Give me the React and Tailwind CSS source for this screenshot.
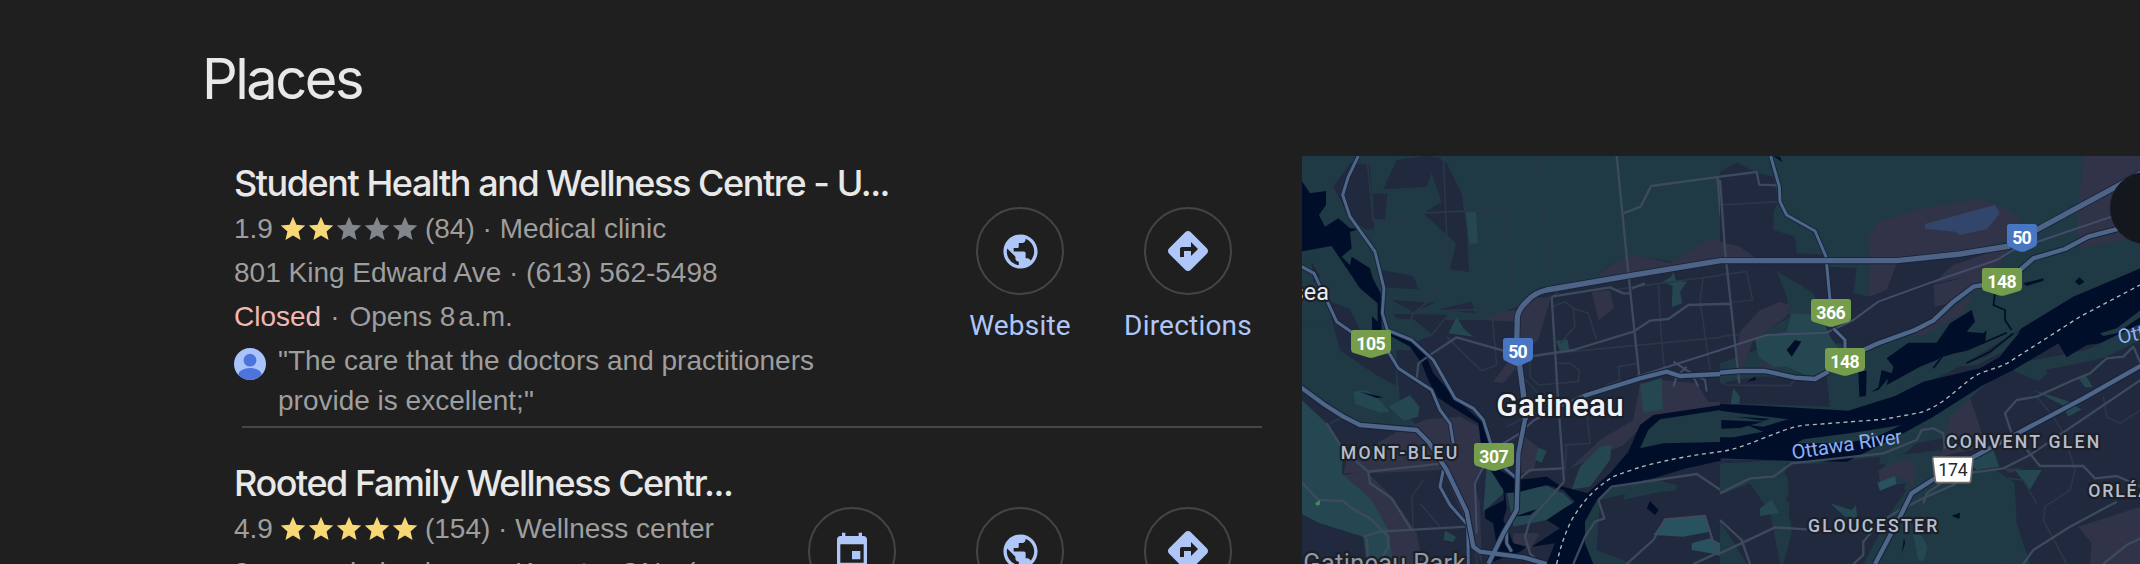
import React from 'react'
import { MdDirections, MdEvent, MdPublic, MdStar } from 'react-icons/md'

const places = [
  {
    name: 'Student Health and Wellness Centre - U...',
    rating: '1.9',
    stars: 2,
    reviews: 84,
    type: 'Medical clinic',
    details: '801 King Edward Ave · (613) 562-5498',
    closed: true,
    quote: ['"The care that the doctors and practitioners', 'provide is excellent;"'],
    actions: ['Website', 'Directions'],
  },
  {
    name: 'Rooted Family Wellness Centr...',
    rating: '4.9',
    stars: 5,
    reviews: 154,
    type: 'Wellness center',
    details: '3+ years in business · Kanata, ON · (',
    actions: ['Schedule', 'Website', 'Directions'],
  },
]

const icons = {
  Website: <MdPublic className="size-[41px]" />,
  Directions: <MdDirections className="size-12" />,
  Schedule: <MdEvent className="size-10" />,
}

function Stars({ count }) {
  return (
    <span className="flex ml-[6px] mr-[6px]">
      {[1, 2, 3, 4, 5].map((n) => (
        <MdStar key={n} className={`size-7 scale-105 ${n <= count ? 'text-[#f8d775]' : 'text-[#80868b]'}`} />
      ))}
    </span>
  )
}

function Avatar() {
  return (
    <svg viewBox="0 0 32 32" className="size-8 shrink-0 mt-[9px]">
      <defs>
        <clipPath id="avatar"><circle cx="16" cy="16" r="16" /></clipPath>
      </defs>
      <g clipPath="url(#avatar)">
        <rect width="32" height="32" fill="#a8c4fb" />
        <circle cx="16" cy="12.2" r="6.4" fill="#4d74dc" />
        <ellipse cx="16" cy="26.5" rx="11.5" ry="6.4" fill="#4d74dc" />
      </g>
    </svg>
  )
}

function Action({ label }) {
  return (
    <button className="w-[168px] flex flex-col items-center text-[#aec6f8]">
      <span className="size-[88px] rounded-full border-2 border-[#444646] flex items-center justify-center">
        {icons[label]}
      </span>
      <span className="mt-[11px] text-[28px] leading-10 font-['Roboto',sans-serif] tracking-[0.2px]">{label}</span>
    </button>
  )
}

function Place({ place }) {
  return (
    <div className="flex justify-between h-[300px] pl-[234px] pr-[30px]">
      <div className="text-[28px] leading-[44px] text-[#9e9e9e] whitespace-nowrap w-0">
        <h3 className="font-['Inter',sans-serif] font-medium text-[36px] leading-[44px] tracking-[-1.45px] text-[#e8e8e8] pt-[5px] pb-[2px]">
          {place.name}
        </h3>
        <div className="flex items-center">
          {place.rating}
          <Stars count={place.stars} />
          <span>({place.reviews}) · {place.type}</span>
        </div>
        <p>{place.details}</p>
        {place.closed && (
          <p>
            <span className="text-[#f0b8b4]">Closed</span>
            <span className="ml-[9px] mr-[10px]">·</span>
            <span>Opens 8<span className="ml-[3px]">a.m.</span></span>
          </p>
        )}
        {place.quote && (
          <div className="flex gap-3">
            <Avatar />
            <div className="leading-10 pt-[2px]">
              {place.quote.map((line) => <p key={line}>{line}</p>)}
            </div>
          </div>
        )}
      </div>
      <div className="flex pt-[51px]">
        {place.actions.map((a) => <Action key={a} label={a} />)}
      </div>
    </div>
  )
}

// The map is traced in two tiles, each 1260 units wide at 3 units per pixel
const west = {
  green: [
    'M0 18H1262V270L1120 335 1000 318 920 350 870 400 700 440 640 475 560 510 440 510 440 494 280 492 340 560 350 600 290 600 290 740 350 830 180 825 6 715Z',
    'M6 510 150 560 290 640 300 750 200 830 6 715Z',
    'M930 1015 1070 990 1130 1005 1130 1020 1060 1030 970 1050 975 1032 900 1050 890 1200 1000 1242 800 1242 870 1080Z',
    'M280 505 340 508 400 555 350 575 320 560Z',
  ],
  urban: [
    'M150 40 210 45 222 235 200 240 150 205 100 110Z',
    'M290 30 380 18 412 22 380 110 250 118Z',
    'M220 130 262 132 255 210 220 205Z',
    'M395 70 412 20 440 40 485 130 500 240 507 365 450 358 468 280 370 190 425 155Z',
    'M245 360 340 378 355 418 245 412Z',
    'M275 450 405 458 340 487Z',
    'M420 478 515 455 525 490Z',
    'M80 450 150 478 190 560 290 640 287 707 220 670 120 600Z',
    'M35 335 60 380 40 400Z',
  ],
  purple: [
    'M870 400 920 352 1000 315 1110 338 1230 268 1262 268V330L1000 378Z',
    'M875 425 930 420 942 475 895 512Z',
    'M752 445 715 570 690 590 660 640 610 700 580 695 650 600 650 515 550 510 600 485 650 480 700 440Z',
    'M300 840 380 808 480 800 540 830 565 940 520 1000 540 1060 545 1242 500 1120 430 960 200 970 130 970 140 930Z',
    'M130 975 200 965 280 1045 350 1150 370 1242 280 1242 265 1140 200 1060Z',
    'M655 845 718 895 700 965 655 970Z',
    'M1085 690 1190 700 1225 755 1262 756V765L1060 795 970 885 810 955 900 870 1000 810 1020 700Z',
    'M640 1150 720 1150 690 1200 640 1180Z',
  ],
  light: [
    'M470 500 490 535 520 560 445 550Z',
    'M160 725 200 720 230 740 270 785 240 788 165 762Z',
    'M265 770 330 735 358 770 355 800 310 812Z',
    'M768 572 802 568 808 598 780 602Z',
    'M498 185 528 187 534 280 508 282Z',
    'M1088 395 1112 382 1120 365 1128 390 1160 397 1140 425 1147 460 1115 472 1118 408Z',
    'M1020 705 1085 683 1088 778 1030 790Z',
    'M900 890 935 885 930 930 870 1010 815 1018 840 950Z',
    'M715 893 740 902 725 938 705 930Z',
    'M560 945 600 990 615 1025 550 1085Z',
    'M0 745 80 820 130 905 125 970 215 1050 265 1140 280 1242 200 1242 190 1160 60 1120 0 1090Z',
    'M620 1020 740 1008 790 1030 820 1060 740 1110 640 1130Z',
    'M435 1143 468 1160 460 1176 430 1170Z',
  ],
  teal: [
    'M1095 1108 1215 1098 1228 1145 1150 1160 1060 1155Z',
    'M1175 1180 1230 1165 1262 1180V1215L1175 1200Z',
  ],
  water: [
    'M0 85 30 130 78 123 78 165 57 195 75 230 115 205 150 235 180 236 150 245 155 295 125 320 150 345 155 320 210 355 218 385 242 430 245 550 216 540 216 498 233 515 233 460 180 415 95 288 0 305Z',
    'M250 545 340 575 380 620 400 670 470 748 555 825 570 900 600 960 650 990 740 980 782 1008 862 1030 930 970 985 905 1020 825 1060 795 1262 766V932L1160 955 1060 985 940 1010 890 1050 855 1115 855 1180 880 1242 740 1242 765 1180 695 1190 780 1135 740 1110 800 1070 825 1055 790 1020 740 1005 660 1025 615 1030 620 1075 610 1110 640 1180 680 1190 660 1205 560 1242 590 1190 580 1120 555 1105 555 1080 612 1050 610 1020 565 950 545 900 535 820 455 770 410 740 385 690 365 640 330 590Z',
    'M1050 1053 1076 1080 1065 1095 1040 1075Z',
    'M180 725 250 742 230 744Z',
    'M640 1100 710 1078 690 1095Z',
  ],
  island: [
    'M1080 808 1262 780V876L1090 880 1020 895 1045 840Z',
  ],
  faint: [
    'M200 18 220 212 290 212 345 190 615 178 645 470',
    'M715 18 720 130 758 410',
    'M430 18 445 370 390 450 340 490 325 530',
    'M440 480 575 478 590 645 545 662 500 620 440 560',
    'M640 470 760 440 830 365 870 380',
    'M1075 400 1085 580 1095 670M1210 380 1200 450 1230 660M940 420 1080 400 1262 376',
    'M755 610 1262 562M755 470 795 455 820 475 865 490 890 570M820 475 825 530 780 580',
    'M690 600 690 680 715 705 835 695 838 660 810 640 770 640',
    'M960 700 955 650 1015 640M640 650 760 780 860 730 960 690',
    'M620 830 700 790 860 780 870 880 795 885',
    'M90 820 150 790 220 800M340 1140 335 1040 370 990M420 1130 360 1060',
    'M530 1242 520 1000 540 960M800 880 795 960',
    'M390 560 440 500',
  ],
  minor: [
    'M950 18 985 370 1018 680',
    'M970 190 1022 170 1053 108 1262 80M1252 80 1262 200',
    'M755 440 930 412 970 430 990 430M755 440 775 760 792 995',
    'M700 618 820 600 1000 545 1050 512 1105 507 1165 465 1262 462',
    'M350 690 355 640 400 608 470 562 610 602M995 415 1035 400',
    'M80 820 130 900 205 965 210 1000 275 1045 335 1140M205 965 430 940',
    'M0 990 55 1050 130 1053 155 1075 210 1105 265 1160 265 1190 235 1242M190 1160 240 1145 500 1130M200 1165 205 1242',
    'M660 985 690 960 790 955M792 995 690 1110 675 1160 690 1210 720 1242',
    'M895 1050 935 1010 1190 972 1262 1020M895 1050 913 1105 885 1115 855 1160 820 1242M980 1242 1060 1170 1095 1108 1215 1098 1250 1210 1262 1215M1250 1210 1180 1242',
  ],
  purpleRoad: [
    'M680 830 700 812 850 735M1010 680 1262 600M1120 635 1175 670 1215 690 1220 725M1160 650 1130 680 1120 710M1180 680 1195 710',
    'M610 880 660 850M530 1150 525 1000 550 950',
  ],
  road: [
    'M175 18 145 80 128 135 150 200 225 305 252 415 247 490 262 540 335 570 400 630 465 745 520 775 550 810 572 880',
    'M0 347 42 370 75 440 110 515 160 550M265 605 295 655 395 720 420 780 450 820 460 880M430 960 420 1010 450 1065 503 1125 505 1242',
    'M615 955 650 985',
    'M620 1130 620 1180 635 1205',
  ],
  highway: [
    'M0 710 75 765 130 800 180 825 350 840 385 875 440 960 500 1085 520 1190 540 1205 670 1222 740 1242',
    'M850 738 1020 685 1100 665 1140 678 1262 672',
    'M675 808 655 910 650 1080 610 1150 565 1242',
  ],
  major: ['M658 640 670 730 676 810M650 590 652 500Q657 475 685 450 705 428 740 420L990 377 1262 332'],
}

const east = {
  green: [
    'M0 18H1262V360L1060 440 900 540 700 660 530 740 380 785 120 765 0 760V640L110 600 105 560 210 500 200 440 160 340 0 270Z',
    'M600 720 780 660 1100 600 1262 520V600L980 660 990 710 850 650 760 745 700 800 680 860 600 830Z',
    'M220 835 680 790 690 860 590 880 520 940 380 950 200 940 180 1040 210 1060 190 1242 0 1242V940L200 930 0 930Z',
    'M500 920 660 900 680 960 880 960 890 1080 950 1242 430 1242 560 1000 480 1010Z',
    'M0 1030 190 970 220 1000 195 1060 250 1240 190 1242 120 1100Z',
  ],
  urban: [
    'M0 65 50 38 110 68 160 80 175 155 160 185 160 240 225 260 230 310 315 315 320 400 300 440 130 340 0 320Z',
    'M0 345 110 350 175 410 110 470 0 540Z',
    'M270 405 320 400 325 350 410 355 400 430 450 440 480 350 520 340 700 320 860 290 780 400 640 500 440 585 340 580 300 480Z',
    'M340 530 470 460 660 400 770 370 780 405 640 515 430 600 370 600Z',
    'M0 700 110 680 320 680 330 770 120 762 0 760Z',
    'M200 950 480 920 470 1000 560 1020 480 1130 400 1242 190 1242 215 1150Z',
    'M15 1030 90 1000 150 1090 180 1242 80 1242 0 1110V1030Z',
    'M750 745 860 650 950 700 1000 655 1100 650 1262 570V1242H930L890 1120 885 1000 800 940Z',
  ],
  purple: [
    'M1090 18H1262V260L1080 295 1070 210Z',
    'M470 220 590 178 780 148 850 175 905 210 880 270 700 310 530 340 500 420 450 440 445 260Z',
    'M700 345 860 290 850 330 800 370 640 400Z',
    'M640 405 790 370 790 410 690 460 645 470Z',
    'M530 555 640 520 760 430 730 490 600 560Z',
    'M0 275 60 290 130 340 0 330Z',
    'M60 545 120 480 180 455 210 465 200 500 100 570 60 680 50 600Z',
    'M750 745 800 890 660 920 690 800Z',
    'M475 960 560 925 590 950 580 1010 540 980 480 1000Z',
    'M1075 1130 1262 1070V1242H1110L1115 1180Z',
    'M850 955 910 955 870 970Z',
    'M110 640 180 640 170 670Z',
  ],
  light: [
    'M215 490 300 495 330 560 360 600 320 660 270 680 200 650 160 650 115 620 105 565 200 545Z',
    'M40 715 60 740 58 762 32 762Z',
    'M120 1075 155 1048 178 1090 120 1098Z',
    'M330 1060 395 1080 408 1065 412 1105 375 1100Z',
    'M1075 685 1095 672 1118 712 1095 712Z',
    'M1035 780 1060 765 1085 778 1045 800Z',
    'M940 720 1050 755 1045 775Z',
    'M580 1155 605 1155 622 1190 612 1232 595 1232Z',
    'M740 930 820 900 838 950 770 960Z',
    'M885 960 965 960 930 1020Z',
  ],
  teal: ['M472 998 525 978 530 1002 480 1022Z'],
  water: [
    'M0 762 130 768 385 782 525 738 610 695 780 655 840 620 905 535 1060 440 1262 355V520L1140 580 1100 585 1040 622 1015 580 880 660 790 705 640 800 550 850 380 935 200 932 0 925Z',
    'M500 625 565 578 650 578 690 520 755 480 765 515 740 545 790 550 800 540 795 580 700 610 600 650 500 705 505 685 475 720 455 725 475 712 485 660 515 670 520 650Z',
    'M415 665 440 662 438 738 418 740Z',
    'M200 600 225 570 244 575 215 620Z',
    'M1065 395 1078 382 1093 395 1078 406Z',
    'M910 400 970 385 970 392 920 408Z',
    'M80 695 105 680 108 690Z',
    'M695 1097 720 1088 718 1107Z',
    'M545 1210 552 1165 555 1180Z',
    'M160 18 180 20 187 36Z',
  ],
  island: [
    'M0 782 100 795 205 808 130 830 80 825 130 845 40 862 0 862Z',
    'M250 868 400 848 545 825 460 865 370 880 230 880Z',
    'M1140 550 1190 535 1262 480V500L1190 550 1150 558Z',
    'M625 665 660 622 740 605 830 560 870 545 740 625 660 640Z',
    'M700 650 800 620 870 560 900 545 850 605 770 645Z',
  ],
  inlet: ['M4 810 60 812 130 815 60 834 4 836Z', 'M50 800 150 806 130 812Z'],
  thinWater: ['M825 430 820 465 855 480 855 510 875 540M640 655 670 615 740 600 860 548M740 640 810 605 880 550'],
  lake: ['M615 222 825 165 840 190 800 238 720 255 705 245 615 236Z'],
  faint: [
    'M0 165 175 155M0 375 80 365 98 450 0 462',
    'M0 560 90 550 170 495 230 485M0 690 20 705 210 707 230 680',
    'M1150 740 1160 800 1200 820 1262 780M950 740 1000 800 1030 850 1065 960 1050 1020 975 1070 970 1110 1040 1242',
    'M860 985 910 990 950 1060M600 1150 640 1190 690 1242M610 1110 620 1060M840 1242 920 1210',
  ],
  minor: [
    'M0 80 110 66 118 104 175 106',
    'M0 90 15 300 58 700M0 462 30 462',
    'M0 1030 90 985 160 980 215 940 490 910 590 870 605 840 640 835 670 850 675 895',
    'M0 1110 65 1170 90 1242M0 1210 165 1132 260 1138M65 1170 75 1200M400 1242 430 1215 430 1175 480 1115 540 1080 620 1040 700 1005 740 970 850 955 930 915 1262 690',
    'M875 850 855 790 890 750 950 740 1060 690 1110 670 1160 625 1210 620 1240 590 1262 640',
    'M880 850 960 948 1090 948 1125 985 1190 978 1262 1010M610 1060 620 1030 670 995',
    'M910 1242 940 1200 1050 1130 1190 1055M1150 1242 1220 1185 1262 1165',
  ],
  purpleRoad: ['M0 600 140 555 320 548 400 510 475 455 640 395 830 330 880 300 1175 200'],
  road: [
    'M152 18 178 110 180 155 200 195 285 243 318 320 330 450M340 535 375 570 375 600',
  ],
  highway: [
    'M0 668 60 663 135 663 225 683 285 687 325 665M430 600 475 580 585 540 640 512 700 455 760 410 790 405M900 360 940 325 1035 297 1105 260 1200 235',
    'M1262 648 1090 745 870 862 660 975 575 1030 540 1100 465 1242',
  ],
  major: ['M0 332H530L720 312 870 288M940 245 1262 70'],
}

const fills = [
  ['green', '#1f3945'],
  ['urban', '#20293e'],
  ['purple', '#313449'],
  ['light', '#244751'],
  ['teal', '#28525f'],
  ['lake', '#32456b'],
  ['water', '#000e29'],
  ['island', '#1f3945'],
  ['inlet', '#000e29'],
]

const lines = [
  ['thinWater', '#000e29', 5],
  ['faint', '#2a3748', 5],
  ['minor', '#3d4a5d', 7],
  ['purpleRoad', '#434c69', 6],
  ['road', '#182236', 14],
  ['road', '#4d6689', 9],
  ['highway', '#182236', 19],
  ['highway', '#4d6689', 13],
  ['major', '#182236', 21],
  ['major', '#4d6388', 16],
]

function Tile({ tile }) {
  return (
    <>
      {fills.map(([key, color]) =>
        tile[key]?.map((d) => <path key={d} d={d} fill={color} />)
      )}
      {lines.map(([key, color, width]) =>
        tile[key]?.map((d) => (
          <path key={d + color} d={d} fill="none" stroke={color} strokeWidth={width} strokeLinejoin="round" />
        ))
      )}
    </>
  )
}

function Shield({ x, y, label, color = '#769d4b' }) {
  const w = label.length > 2 ? 120 : 90
  return (
    <g transform={`translate(${x} ${y})`}>
      <path
        d={`M8 0H${w - 8}Q${w} 0 ${w} 8V58Q${w} 66 ${w - 8} 69L${w / 2 + 10} 82Q${w / 2} 85 ${w / 2 - 10} 82L8 69Q0 66 0 58V8Q0 0 8 0Z`}
        fill={color}
      />
      <text x={w / 2} y="60" fill="#fff" fontSize="53" fontWeight="700" textAnchor="middle" textLength={w - 32}>
        {label}
      </text>
    </g>
  )
}

function Label({ x, y, size = 53, width, color = '#b5bdce', weight = 500, children, ...rest }) {
  return (
    <text
      x={x}
      y={y}
      fontSize={size}
      fontWeight={weight}
      fill={color}
      stroke="#1c2026"
      strokeWidth="13"
      strokeLinejoin="round"
      paintOrder="stroke"
      textLength={width}
      {...rest}
    >
      {children}
    </text>
  )
}

function Map() {
  return (
    <div className="relative w-[838px] h-[408px] overflow-hidden shrink-0">
      <svg viewBox="6 18 2514 1224" className="w-full h-full font-['Roboto',sans-serif]">
        <rect width="2520" height="1242" fill="#20293e" />
        <Tile tile={west} />
        <g transform="translate(1260 0)"><Tile tile={east} /></g>
        <path
          d="M770 1242Q785 1170 815 1110C850 1050 890 1010 940 980Q1060 930 1260 905C1340 895 1440 835 1510 826L1750 808 1860 788C1940 765 1990 690 2045 668C2080 655 2110 650 2140 628L2340 500 2520 405"
          fill="none" stroke="#b9b7b5" strokeWidth="4" strokeDasharray="12 11"
        />
        <path d="M45 1060 60 1050V1064L50 1067Z" fill="#3f8a54" />
        <Shield x={153} y={540} label="105" />
        <Shield x={522} y={879} label="307" />
        <Shield x={609} y={564} label="50" color="#4876c2" />
        <Shield x={2121} y={222} label="50" color="#4876c2" />
        <Shield x={2046} y={354} label="148" />
        <Shield x={1533} y={447} label="366" />
        <Shield x={1575} y={594} label="148" />
        <path d="M1902 921H2015Q2020 921 2019 927L2012 993Q2011 998 2006 998H1912Q1907 998 1906 993L1898 927Q1898 921 1902 921Z" fill="#fff" stroke="#706d6c" strokeWidth="5" />
        <text x="1915" y="978" fontSize="53" fill="#22262e" textLength="88">174</text>
        <Label x={-25} y={451} size={70} width={112} color="#e9ebef" weight={400}>sea</Label>
        <Label x={589} y={799} size={94} width={382} color="#f1f3f8">Gatineau</Label>
        <Label x={122} y={928} width={350}>MONT-BLEU</Label>
        <Label x={10} y={1265} size={76} width={486} color="#8f99ab" weight={400}>Gatineau Park</Label>
        <Label x={1938} y={895} width={460}>CONVENT GLEN</Label>
        <Label x={1524} y={1147} width={388}>GLOUCESTER</Label>
        <Label x={2365} y={1042} width={265}>ORLÉANS</Label>
        <Label x={0} y={0} size={60} width={334} color="#8fb0f5" weight={400} strokeWidth="0" transform="translate(1478 928) rotate(-8.5)">Ottawa River</Label>
        <Label x={0} y={0} size={60} width={334} color="#8fb0f5" weight={400} strokeWidth="0" transform="translate(2458 582) rotate(-12)">Ottawa River</Label>
      </svg>
      <button className="absolute top-4 -right-[42px] size-[72px] rounded-full bg-[#14171d]" aria-label="Expand map" />
    </div>
  )
}

export default function App() {
  return (
    <div className="w-[2140px] h-[564px] overflow-hidden bg-[#1f1f1f] font-['Liberation_Sans',Arial,sans-serif]">
      <h2 className="h-[156px] pl-[202px] pt-[43px] font-['Inter',sans-serif] text-[56px] leading-[72px] tracking-[-2.5px] text-[#e8e8e8]">
        Places
      </h2>
      <div className="flex">
        <div className="w-[1302px] shrink-0">
          <Place place={places[0]} />
          <div className="-mt-[30px] mb-7 ml-[242px] mr-10 h-[2px] bg-[#474747]" />
          <Place place={places[1]} />
        </div>
        <Map />
      </div>
    </div>
  )
}
